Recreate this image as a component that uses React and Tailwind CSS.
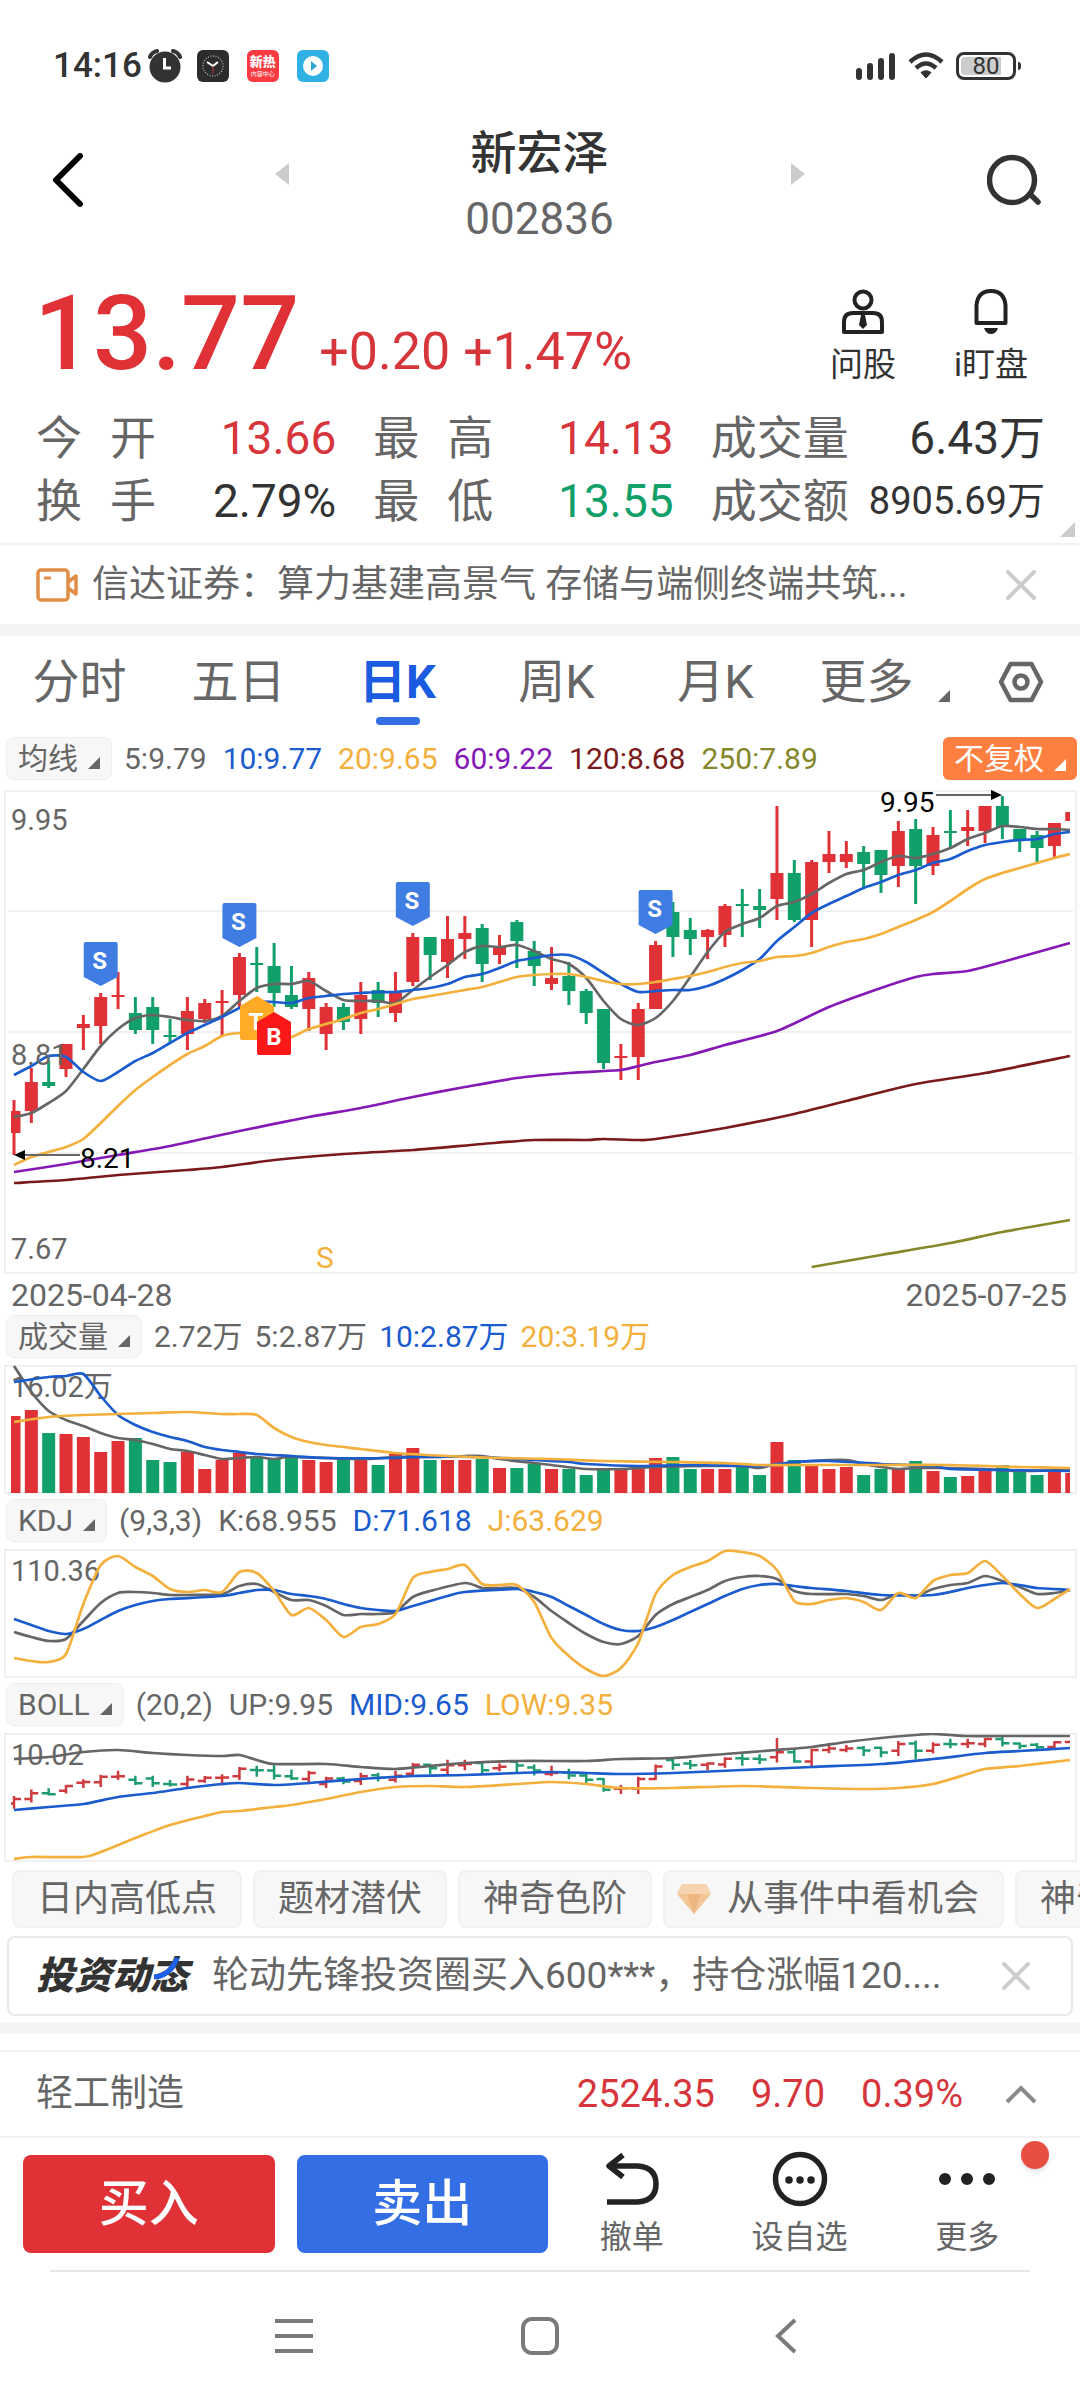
import { useState } from 'react';
import { clsx } from 'clsx';

const RED = '#e03236';
const GREEN = '#12a06a';
const GRAY = '#666666';
const BLUE = '#1a5bce';
const YELLOW = '#f3b03c';

// 61 trading days, one every 17.34 units
const dayX = (i) => 14 + i * 17.34;

// [up, high, bodyTop, bodyBottom, low]
const CANDLES = [
  [1, 320, 331, 353, 375], [1, 288, 302, 331, 343], [0, 281, 302, 306, 308], [1, 264, 264, 289, 297],
  [1, 235, 244, 248, 270], [1, 213, 217, 246, 264], [1, 192, 215, 217, 229], [0, 217, 233, 250, 254],
  [0, 217, 227, 250, 264], [0, 239, 255, 257, 262], [1, 217, 231, 254, 270], [1, 219, 223, 239, 243],
  [1, 210, 221, 223, 256], [1, 173, 177, 215, 229], [0, 167, 183, 185, 212], [0, 163, 186, 213, 227],
  [0, 186, 215, 227, 229], [1, 192, 198, 229, 251], [1, 223, 227, 254, 270], [0, 223, 227, 242, 250],
  [1, 202, 215, 239, 254], [0, 202, 210, 223, 237], [1, 192, 213, 233, 242], [1, 153, 157, 202, 206],
  [0, 157, 157, 175, 200], [1, 136, 159, 182, 198], [1, 136, 153, 159, 179], [0, 144, 148, 184, 202],
  [1, 155, 167, 175, 184], [0, 140, 142, 161, 188], [0, 161, 171, 186, 206], [1, 167, 198, 204, 210],
  [0, 182, 196, 211, 225], [0, 209, 211, 233, 244], [0, 229, 229, 283, 289], [1, 264, 276, 278, 300],
  [1, 223, 229, 277, 300], [1, 161, 165, 229, 229], [0, 122, 132, 157, 177], [0, 138, 150, 159, 175],
  [1, 149, 150, 157, 179], [1, 124, 126, 155, 167], [0, 109, 124, 126, 157], [0, 109, 126, 130, 148],
  [1, 26, 93, 119, 140], [0, 80, 93, 140, 142], [1, 80, 82, 140, 167], [1, 51, 74, 82, 93],
  [1, 61, 74, 82, 88], [0, 66, 72, 84, 107], [0, 70, 70, 95, 113], [1, 41, 51, 86, 107],
  [0, 39, 49, 86, 124], [1, 47, 55, 86, 95], [0, 30, 51, 53, 68], [1, 30, 47, 51, 66],
  [1, 26, 26, 51, 63], [0, 16, 26, 47, 59], [0, 49, 49, 61, 72], [0, 51, 55, 68, 82],
  [1, 43, 43, 66, 77], [1, 32, 32, 41, 41],
];

const VOLUMES = [
  77, 83, 60, 59, 56, 41, 52, 55, 33, 31, 41, 24, 33, 40, 35, 34, 36, 33, 31, 34, 34,
  28, 39, 45, 33, 33, 33, 34, 25, 25, 29, 24, 24, 18, 25, 24, 25, 35, 36, 24, 24, 24,
  26, 18, 51, 33, 28, 24, 26, 18, 24, 24, 32, 22, 16, 17, 22, 28, 21, 18, 21, 20,
];

const daily = (values) => values.map((v, i) => [i, v]);

const PRICE_LINES = [
  { color: GRAY, points: daily([337, 333, 323, 311, 289, 266, 249, 238, 235, 237, 240, 241, 236, 221, 208, 204, 204, 201, 211, 220, 221, 221, 223, 210, 197, 185, 172, 166, 167, 165, 171, 179, 184, 198, 221, 239, 245, 238, 221, 197, 172, 152, 144, 138, 126, 122, 114, 103, 94, 90, 82, 76, 78, 74, 68, 59, 53, 46, 47, 49, 49, 50]) },
  { color: BLUE, points: daily([295, 286, 276, 277, 292, 301, 292, 281, 273, 263, 253, 245, 237, 228, 222, 222, 223, 218, 216, 214, 213, 212, 212, 210, 208, 204, 197, 194, 188, 181, 178, 175, 175, 182, 193, 204, 212, 211, 210, 210, 206, 199, 190, 179, 161, 147, 133, 124, 116, 108, 102, 95, 90, 83, 79, 71, 65, 62, 60, 59, 54, 52]) },
  { color: YELLOW, points: daily([385, 377, 372, 367, 359, 343, 326, 310, 297, 285, 274, 266, 256, 253, 254, 259, 257, 249, 244, 239, 233, 229, 224, 219, 216, 213, 210, 207, 202, 197, 195, 194, 194, 197, 201, 204, 204, 202, 199, 196, 192, 187, 183, 181, 177, 176, 173, 167, 162, 159, 154, 147, 140, 132, 121, 109, 99, 93, 88, 83, 78, 74]) },
  { color: '#8519b5', points: [[0, 392], [3, 384], [6, 375], [9, 366], [13, 351], [17, 337], [20, 328], [23, 317], [26, 307], [29, 298], [32, 293], [35, 290], [36, 286], [37, 282], [39, 275], [41, 265], [44, 251], [47, 227], [50, 208], [52, 197], [53, 194], [55, 191], [57, 182], [61, 163]] },
  { color: '#7a1a1a', points: [[0, 403], [3, 400], [6, 395], [10, 390], [12, 387], [15, 380], [19, 374], [23, 370], [27, 364], [30, 360], [33, 360], [34, 359], [36, 360], [37, 359], [41, 348], [45, 334], [48, 321], [52, 304], [56, 293], [61, 276]] },
  { color: '#86862b', points: [[46, 487], [50, 475], [54, 463], [57, 452], [61, 440]] },
];

const VOLUME_LINES = [
  { color: GRAY, points: [[0, 1], [1, 27], [2, 46], [3, 55], [4, 61], [5, 68], [6, 73], [7, 75], [8, 79], [9, 84], [10, 86], [11, 90], [12, 94], [13, 93], [14, 92], [15, 94], [16, 92], [20, 94], [22, 92], [24, 92], [26, 91], [27, 91], [28, 94], [30, 98], [31, 100], [33, 104], [35, 104], [37, 102], [40, 101], [42, 101], [43, 103], [44, 99], [46, 96], [48, 95], [49, 99], [50, 102], [51, 104], [52, 103], [54, 103], [56, 104], [58, 106], [61, 105]] },
  { color: BLUE, points: [[0, 17], [2, 12], [3, 11], [4, 9], [5, 31], [6, 50], [7, 60], [8, 67], [9, 72], [10, 76], [11, 82], [12, 85], [13, 87], [14, 89], [16, 91], [18, 93], [22, 93], [23, 92], [27, 92], [30, 95], [32, 97], [33, 99], [36, 101], [39, 100], [43, 101], [45, 97], [47, 96], [50, 99], [53, 101], [54, 104], [57, 105], [61, 106]] },
  { color: YELLOW, points: [[0, 57], [2, 52], [4, 50], [6, 49], [8, 48], [10, 47], [12, 49], [13, 49], [14, 50], [15, 63], [16, 72], [17, 77], [18, 80], [20, 84], [22, 88], [25, 91], [28, 93], [31, 94], [34, 96], [38, 97], [41, 98], [43, 100], [45, 100], [50, 100], [54, 100], [58, 102], [61, 103]] },
];

const KDJ_LINES = [
  { color: GRAY, points: [[0, 83], [1, 88], [2, 92], [3, 90], [4, 72], [5, 54], [6, 44], [7, 43], [8, 44], [9, 46], [10, 46], [12, 45], [13, 37], [14, 35], [15, 43], [16, 51], [17, 51], [18, 57], [19, 66], [20, 65], [21, 65], [22, 63], [23, 48], [24, 42], [26, 34], [27, 39], [28, 39], [29, 39], [30, 48], [31, 62], [32, 74], [33, 85], [34, 93], [35, 95], [36, 87], [37, 66], [38, 55], [39, 48], [40, 41], [41, 32], [42, 28], [43, 27], [44, 30], [45, 42], [46, 45], [48, 45], [49, 47], [50, 51], [51, 45], [52, 47], [53, 40], [54, 36], [55, 34], [56, 27], [57, 32], [58, 38], [59, 45], [60, 44], [61, 41]] },
  { color: BLUE, points: [[0, 70], [1, 76], [2, 82], [3, 85], [4, 80], [5, 71], [6, 62], [7, 56], [8, 52], [9, 50], [12, 47], [13, 44], [14, 41], [15, 41], [16, 45], [17, 47], [18, 50], [19, 55], [20, 59], [21, 61], [22, 62], [23, 57], [24, 52], [25, 47], [26, 43], [29, 40], [30, 43], [31, 48], [32, 57], [33, 66], [34, 75], [35, 81], [36, 82], [37, 78], [38, 71], [39, 63], [40, 55], [41, 47], [42, 40], [43, 36], [44, 35], [45, 37], [46, 39], [48, 42], [50, 46], [53, 46], [55, 39], [56, 36], [57, 34], [58, 36], [59, 39], [60, 40], [61, 41]] },
  { color: YELLOW, points: [[0, 109], [1, 112], [2, 113], [3, 105], [4, 55], [5, 16], [6, 7], [7, 18], [8, 27], [9, 40], [10, 43], [11, 41], [12, 43], [13, 23], [14, 24], [15, 42], [16, 66], [17, 59], [18, 71], [19, 88], [20, 78], [21, 75], [22, 65], [23, 29], [24, 23], [25, 20], [26, 16], [27, 35], [28, 36], [29, 36], [30, 53], [31, 89], [32, 107], [33, 120], [34, 127], [35, 119], [36, 94], [37, 45], [38, 26], [39, 18], [40, 12], [41, 2], [42, 3], [43, 7], [44, 21], [45, 52], [46, 55], [47, 51], [48, 49], [49, 53], [50, 61], [51, 44], [52, 49], [53, 32], [54, 26], [55, 24], [56, 12], [57, 27], [58, 45], [59, 59], [60, 50], [61, 40]] },
];

const BOLL_LINES = [
  { color: GRAY, points: [[0, 26], [2, 24], [4, 19], [6, 17], [8, 20], [10, 22], [12, 23], [13, 22], [14, 27], [15, 31], [18, 31], [20, 34], [22, 36], [24, 33], [26, 30], [29, 28], [33, 28], [35, 26], [38, 25], [41, 21], [44, 17], [46, 14], [48, 9], [50, 5], [52, 2], [53, 1], [54, 2], [55, 3], [57, 3], [61, 3]] },
  { color: BLUE, points: [[0, 77], [2, 74], [4, 71], [6, 64], [8, 60], [10, 55], [12, 51], [13, 50], [15, 52], [17, 50], [20, 46], [23, 43], [26, 42], [29, 40], [31, 39], [33, 40], [35, 41], [38, 40], [42, 37], [46, 34], [50, 31], [53, 26], [56, 20], [58, 18], [61, 15]] },
  { color: YELLOW, points: [[0, 126], [1, 124], [4, 124], [5, 119], [7, 105], [9, 92], [11, 83], [12, 79], [13, 78], [15, 74], [16, 72], [18, 66], [20, 59], [22, 54], [24, 53], [26, 54], [29, 51], [31, 49], [33, 51], [35, 55], [38, 55], [42, 53], [46, 55], [49, 56], [51, 55], [53, 51], [55, 41], [56, 36], [58, 33], [61, 27]] },
];

const MARKERS = [
  { day: 5, y: 162, label: 'S' },
  { day: 13, y: 123, label: 'S' },
  { day: 23, y: 102, label: 'S' },
  { day: 37, y: 110, label: 'S' },
];

// Catmull-Rom spline through the points
function curve(points) {
  const p = points.map(([i, y]) => [Math.min(dayX(i), 1070), y]);
  let d = `M${p[0][0]} ${p[0][1]}`;
  for (let i = 0; i < p.length - 1; i++) {
    const a = p[i - 1] || p[i];
    const b = p[i];
    const c = p[i + 1];
    const e = p[i + 2] || c;
    d += `C${b[0] + (c[0] - a[0]) / 8} ${b[1] + (c[1] - a[1]) / 8} ${c[0] - (e[0] - b[0]) / 8} ${c[1] - (e[1] - b[1]) / 8} ${c[0]} ${c[1]}`;
  }
  return d;
}

function Lines({ lines }) {
  return lines.map((line) => (
    <path key={line.color} d={curve(line.points)} fill="none" stroke={line.color} strokeWidth="2.700" />
  ));
}

function barSpan(i) {
  const left = Math.max(dayX(i) - 6.5, 11);
  const right = Math.min(dayX(i) + 6.5, 1070);
  return { x: left, width: right - left };
}

function PriceChart() {
  return (
    <svg viewBox="0 10 1080 484" className="block w-full overflow-visible" role="img" aria-label="日K线图">
      <rect x="5" y="11" width="1071" height="482" fill="none" stroke="#f0f0f0" strokeWidth="2" />
      <path d="M8 131H1073M8 252H1073M8 373H1073" stroke="#f0f0f0" strokeWidth="2" />
      {CANDLES.map(([up, high, top, bottom, low], i) => (
        <g key={i} fill={up ? RED : GREEN}>
          {i < 61 && <rect x={dayX(i) - 1.5} y={high} width="3" height={low - high} />}
          <rect {...barSpan(i)} y={top} height={bottom - top} />
        </g>
      ))}
      <Lines lines={PRICE_LINES} />
      <g fill={GRAY} fontSize="29">
        <text x="11" y="50">9.95</text>
        <text x="11" y="285">8.81</text>
        <text x="11" y="479">7.67</text>
      </g>
      <g fill="#000" fontSize="28">
        <path d="M24 375H80M936 15H992" stroke={GRAY} strokeWidth="2" />
        <path d="M14 375l11-5v10zM1002 15l-11-5v10z" />
        <text x="80" y="388">8.21</text>
        <text x="880" y="32">9.95</text>
      </g>
      <text x="316" y="488" fill={YELLOW} fontSize="30">S</text>
      <g fill="#fff" fontSize="24" fontWeight="700" textAnchor="middle">
        {MARKERS.map((m) => (
          <g key={m.day}>
            <path
              d={`M${dayX(m.day) - 15} ${m.y}h30q2 0 2 2v33l-17 9l-17 -9v-33q0 -2 2 -2z`}
              fill="#3f7de3"
            />
            <text x={dayX(m.day) - 1} y={m.y + 27}>{m.label}</text>
          </g>
        ))}
        <path d="M257 216l17 10v32q0 2 -2 2h-30q-2 0 -2 -2v-32z" fill="#ffab27" />
        <text x="256" y="250">T</text>
        <path d="M274 232l17 10v31q0 2 -2 2h-30q-2 0 -2 -2v-31z" fill="#fb1818" />
        <text x="274" y="265">B</text>
      </g>
    </svg>
  );
}

function SubChart({ title, max, lines, children }) {
  return (
    <svg viewBox="0 0 1080 129" className="block w-full" role="img" aria-label={title}>
      <rect x="5" y="1" width="1071" height="127" fill="none" stroke="#f0f0f0" strokeWidth="2" />
      {children}
      <text x="11" y="32" fill={GRAY} fontSize="29">{max}</text>
      <Lines lines={lines} />
    </svg>
  );
}

function VolumeBars() {
  return VOLUMES.map((v, i) => (
    <rect key={i} {...barSpan(i)} y={128 - v} height={v} fill={CANDLES[i][0] ? RED : GREEN} />
  ));
}

function BollBars() {
  const y = (v) => 6 + (v - 26) * 0.197;
  return CANDLES.map(([up, high, top, bottom, low], i) => {
    const x = dayX(i);
    const open = y(up ? bottom : top);
    const close = y(up ? top : bottom);
    const stem = i < 61 ? `M${x} ${y(high) - 1}V${y(low) + 1}M${x} ${close}H${x + 7}` : '';
    return (
      <path
        key={i}
        d={`M${Math.max(x - 7, 11)} ${open}H${Math.min(x, 1070)}${stem}`}
        stroke={up ? '#cf3a3f' : '#1f9d6f'}
        strokeWidth="2.500"
      />
    );
  });
}

function Corner({ className }) {
  return (
    <svg viewBox="0 0 12 12" className={clsx('inline-block size-3', className)} aria-hidden="true">
      <path d="M12 0V12H0Z" fill="currentColor" />
    </svg>
  );
}

function IndicatorRow({ name, values, className, gap = 'gap-4', children }) {
  return (
    <div className={clsx('flex items-center pl-[6px] text-[30px] leading-[43px] whitespace-nowrap', className)}>
      <button className="mr-3 flex h-[43px] items-center gap-[10px] rounded-lg border border-[#eeeeee] bg-[#f7f7f7] px-[11px] text-[30px] text-[#666666]">
        {name}
        <Corner className="mt-2" />
      </button>
      <div className={clsx('flex', gap)}>
        {values.map(([text, color]) => (
          <span key={text} className={color}>{text}</span>
        ))}
      </div>
      {children}
    </div>
  );
}

const gray = 'text-[#666666]';
const blue = 'text-[#1a5bce]';
const yellow = 'text-[#f3b03c]';

function CloseIcon({ className }) {
  return (
    <svg viewBox="0 0 30 30" className={className} fill="none" stroke="#cccccc" strokeWidth="4" strokeLinecap="round">
      <path d="M2 2L28 28M28 2L2 28" />
    </svg>
  );
}

function StatusBar() {
  return (
    <div className="flex h-[86px] items-end justify-between pr-[59px] pl-[53px]">
      <div className="flex h-10 items-center">
        <span className="text-[35px] leading-10 font-medium text-[#333333]">14:16</span>
        <svg viewBox="0 0 34 34" className="ml-1.5 size-[34px]">
          <circle cx="17" cy="18" r="15.5" fill="#333" />
          <path d="M2 8Q4 3 9 2M32 8Q30 3 25 2" stroke="#333" strokeWidth="4" strokeLinecap="round" fill="none" />
          <path d="M16.500 9V19H23" stroke="#fff" strokeWidth="3" fill="none" />
        </svg>
        <svg viewBox="0 0 32 32" className="ml-[15px] size-8">
          <rect width="32" height="32" rx="6" fill="#2c2c2c" />
          <circle cx="16" cy="16" r="10" fill="none" stroke="#aaa" strokeWidth="1.500" strokeDasharray="1 1.600" />
          <path d="M10 12L16 16L21 12" stroke="#fff" strokeWidth="2" fill="none" />
          <path d="M16 16V24" stroke="#c33" strokeWidth="1" />
        </svg>
        <div className="ml-[18px] flex size-8 flex-col items-center justify-center rounded-md bg-[#fb3a41] text-white">
          <span className="text-[13px] leading-4 font-black">新热</span>
          <span className="text-[6px] leading-2">内容中心</span>
        </div>
        <svg viewBox="0 0 32 32" className="ml-[18px] size-8">
          <rect width="32" height="32" rx="6" fill="#2fb2e3" />
          <circle cx="16" cy="16" r="10" fill="#fff" />
          <path d="M14 11V21L20 16Z" fill="#2fa5d3" />
        </svg>
      </div>
      <div className="flex h-10 items-center gap-3">
        <svg viewBox="0 0 40 28" className="h-7 w-10" stroke="#333" strokeWidth="6" strokeLinecap="round">
          <path d="M3 25V19M14 25V14M25 25V9M36 25V4" />
        </svg>
        <svg viewBox="0 0 36 28" className="h-7 w-9" fill="none" stroke="#333" strokeWidth="4.500">
          <path d="M2 10Q18 -5 34 10" />
          <path d="M8 16Q18 7 28 16" />
          <path d="M13 20.500Q18 17 23 20.500L18 26Z" fill="#333" strokeWidth="1" />
        </svg>
        <div className="flex items-center">
          <div className="relative flex h-7 w-[60px] items-center justify-center overflow-hidden rounded-lg border-3 border-[#333333]">
            <span className="absolute inset-y-[2px] left-[2px] w-10 rounded-l-sm bg-[#cccccc]" />
            <span className="relative text-[24px] leading-6 text-[#333333]">80</span>
          </div>
          <span className="ml-[2px] h-2 w-[3px] rounded-r bg-[#333333]" />
        </div>
      </div>
    </div>
  );
}

function Header() {
  return (
    <header className="flex h-[188px] items-center justify-between pr-[37px] pl-[52px]">
      <button aria-label="返回" className="w-10">
        <svg viewBox="0 0 32 54" className="h-[54px] w-8" fill="none" stroke="#000" strokeWidth="6" strokeLinecap="round" strokeLinejoin="round">
          <path d="M28 3L4 27L28 51" />
        </svg>
      </button>
      <div className="flex w-[530px] items-center justify-between">
        <button aria-label="上一只" className="pb-3">
          <svg viewBox="0 0 14 22" className="h-[22px] w-3.5"><path d="M14 0V22L0 11Z" fill="#ccc" /></svg>
        </button>
        <div className="pt-3 text-center leading-[66px]">
          <h1 className="text-[46px] font-medium text-[#333333]">新宏泽</h1>
          <p className="text-[44px] text-[#666666]">002836</p>
        </div>
        <button aria-label="下一只" className="pb-3">
          <svg viewBox="0 0 14 22" className="h-[22px] w-3.5"><path d="M0 0V22L14 11Z" fill="#ccc" /></svg>
        </button>
      </div>
      <button aria-label="搜索">
        <svg viewBox="0 0 56 52" className="h-[52px] w-14" fill="none" stroke="#333" strokeWidth="5.500" strokeLinecap="round">
          <circle cx="25" cy="26" r="22.500" />
          <path d="M44 41L51 48" />
        </svg>
      </button>
    </header>
  );
}

const STATS = [
  ['今开', '13.66', 'text-[46px] text-[#d6353b]'],
  ['最高', '14.13', 'text-[46px] text-[#d6353b]'],
  ['成交量', '6.43万', 'text-[46px] text-[#333333]'],
  ['换手', '2.79%', 'text-[46px] text-[#333333]'],
  ['最低', '13.55', 'text-[46px] text-[#12a06a]'],
  ['成交额', '8905.69万', 'text-[38px] text-[#333333]'],
];

function Quote() {
  return (
    <section className="relative border-b-2 border-[#f2f2f2] pb-[10px]">
      <div className="flex h-[133px] justify-between pr-[52px] pl-[34px]">
        <div className="flex items-baseline gap-5 text-[#e03236]">
          <span className="text-[104px] leading-[120px] font-medium">13.77</span>
          <span className="text-[52px] text-[#d6353b]">+0.20 +1.47%</span>
        </div>
        <div className="flex gap-[58px] pt-[15px] text-[33px] leading-10 text-[#333333]">
          <button className="flex h-[96px] flex-col items-center justify-between">
            <svg viewBox="0 0 44 46" className="h-[46px] w-11" fill="none" stroke="#222" strokeWidth="4">
              <circle cx="22" cy="11" r="8.500" />
              <path d="M3 43V33Q3 24 12 24H32Q41 24 41 33V43Z" strokeLinejoin="round" />
              <path d="M20 26H24L26 36L22 40L18 36Z" fill="#222" stroke="none" />
            </svg>
            <span>问股</span>
          </button>
          <button className="flex h-[96px] flex-col items-center justify-between">
            <svg viewBox="0 0 34 46" className="h-[46px] w-[34px]" fill="none" stroke="#222" strokeWidth="4">
              <path d="M2.500 34V16Q4 2 17 2Q30 2 31.500 16V34Z" strokeLinejoin="round" />
              <path d="M10 39H24Q22 45 17 45Q12 45 10 39Z" fill="#222" stroke="none" />
            </svg>
            <span>i盯盘</span>
          </button>
        </div>
      </div>
      <dl className="grid grid-cols-[300fr_300fr_334fr] gap-x-[37px] pr-[35px] pl-9 leading-[63px] text-[46px]">
        {STATS.map(([label, value, style]) => (
          <div key={label} className="flex items-center justify-between whitespace-nowrap">
            <dt className={clsx('flex justify-between text-[#666666]', label.length === 2 && 'w-[120px]')}>
              {label.length === 2 ? label.split('').map((c) => <span key={c}>{c}</span>) : label}
            </dt>
            <dd className={style}>{value}</dd>
          </div>
        ))}
      </dl>
      <Corner className="absolute right-[5px] bottom-1.5 size-[15px] text-[#cccccc]" />
    </section>
  );
}

function News() {
  return (
    <div className="flex h-[91px] items-center border-b-12 border-[#f4f4f4] pr-11 pl-9">
      <svg viewBox="0 0 42 34" className="h-[34px] w-[42px]" fill="none" stroke="#e08e45" strokeWidth="3.500" strokeLinejoin="round">
        <rect x="2" y="2" width="30" height="30" rx="3" />
        <path d="M8 10H15" strokeWidth="3" />
        <path d="M32 14L40 8V26L32 20" />
      </svg>
      <a href="#news" className="ml-3.5 flex-1 truncate text-[37px] text-[#666666]">
        信达证券：算力基建高景气 存储与端侧终端共筑...
      </a>
      <button aria-label="关闭">
        <CloseIcon className="size-[30px]" />
      </button>
    </div>
  );
}

function Tabs() {
  const [active, setActive] = useState('日K');
  return (
    <nav className="flex h-[92px] items-center">
      <div className="grid h-full flex-1 grid-cols-6">
        {['分时', '五日', '日K', '周K', '月K', '更多'].map((tab) => (
          <button
            key={tab}
            onClick={() => setActive(tab)}
            className={clsx(
              'relative flex items-center justify-center text-[47px]',
              tab === active ? 'font-bold text-[#1a5be0]' : 'text-[#666666]',
              tab === '更多' && 'pl-5'
            )}
          >
            {tab}
            {tab === '更多' && <Corner className="mt-7 ml-6" />}
            {tab === active && (
              <span className="absolute bottom-[3px] left-1/2 h-2 w-11 -translate-x-1/2 rounded-full bg-[#346ee5]" />
            )}
          </button>
        ))}
      </div>
      <button aria-label="设置" className="flex w-[126px] justify-center pl-2">
        <svg viewBox="0 0 46 42" className="h-[42px] w-[46px]" fill="none" stroke="#666" strokeWidth="4.500" strokeLinejoin="round">
          <path d="M12.500 3H33.500L43 21L33.500 39H12.500L3 21Z" />
          <circle cx="23" cy="21" r="6.500" />
        </svg>
      </button>
    </nav>
  );
}

function ChartTags() {
  const tag = 'flex h-[58px] shrink-0 items-center rounded-lg border-2 border-[#f1f1f1] bg-[#f7f7f7]';
  return (
    <div className="flex gap-[11px] overflow-hidden pt-2 pl-3 text-[36px] whitespace-nowrap text-[#666666]">
      <button className={clsx(tag, 'px-[23px]')}>日内高低点</button>
      <button className={clsx(tag, 'px-[23px]')}>题材潜伏</button>
      <button className={clsx(tag, 'px-[23px]')}>神奇色阶</button>
      <button className={clsx(tag, 'gap-4 pr-[23px] pl-3')}>
        <svg viewBox="0 0 34 30" className="h-[30px] w-[34px]">
          <path d="M5 0H29L34 10L17 30L0 10Z" fill="#f3c698" />
          <path d="M5 0H29L34 10H0Z" fill="#f6d4b0" />
          <path d="M10 10L17 30L24 10Z" fill="#eeb781" />
        </svg>
        从事件中看机会
      </button>
      <button className={clsx(tag, 'px-[23px]')}>神奇九转</button>
    </div>
  );
}

function Banner() {
  return (
    <div className="mx-[7px] mt-2 flex h-20 items-center rounded-lg border-2 border-[#e8e8e8] pr-[41px] pl-[27px]">
      <div className="relative mr-6 text-[38px] leading-10 font-black text-[#333333] italic">
        投资动态
        <svg viewBox="0 0 28 24" className="absolute top-0 right-2 h-6 w-7" fill="none" stroke="#1e62ec" strokeWidth="5">
          <path d="M25 2Q18 20 2 21" />
        </svg>
      </div>
      <a href="#feed" className="flex-1 truncate text-[37px] text-[#666666]">
        轮动先锋投资圈买入600***，持仓涨幅120....
      </a>
      <button aria-label="关闭">
        <CloseIcon className="size-7" />
      </button>
    </div>
  );
}

function Sector() {
  return (
    <section className="mt-1.5 border-t-12 border-[#f4f4f4] pt-4">
      <div className="flex h-[88px] items-center border-y-2 border-[#f2f2f2] pr-[43px] pl-9 text-[38px] text-[#d6353b]">
        <span className="flex-1 text-[37px] text-[#666666]">轻工制造</span>
        <span>2524.35</span>
        <span className="ml-9">9.70</span>
        <span className="ml-9">0.39%</span>
        <button aria-label="展开" className="ml-[42px]">
          <svg viewBox="0 0 32 20" className="h-5 w-8" fill="none" stroke="#8a8a8a" strokeWidth="4">
            <path d="M2 18L16 4L30 18" />
          </svg>
        </button>
      </div>
    </section>
  );
}

function Action({ label, children }) {
  return (
    <button className="flex flex-2 flex-col items-center gap-[10px] text-[32px] leading-10 text-[#666666]">
      <svg viewBox="0 0 56 56" className="size-14" fill="none" stroke="#222" strokeWidth="5.500">
        {children}
      </svg>
      {label}
    </button>
  );
}

function TradeBar() {
  return (
    <footer className="relative flex h-[132px] items-center pr-[29px] pl-[23px]">
      <button className="mr-[22px] h-[98px] flex-3 rounded-lg bg-[#e03236] text-[50px] font-medium text-white">买入</button>
      <button className="h-[98px] flex-3 rounded-lg bg-[#346ee5] text-[50px] font-medium text-white">卖出</button>
      <Action label="撤单">
        <path d="M4 15H33Q52 16 52 33T33 51H3" />
        <path d="M19 4L5 15L19 26" strokeLinejoin="round" />
      </Action>
      <Action label="设自选">
        <circle cx="28" cy="28" r="24.500" />
        <path d="M17 29h.01M28 29h.01M39 29h.01" strokeWidth="7.500" strokeLinecap="round" />
      </Action>
      <Action label="更多">
        <path d="M6 28h.01M28 28h.01M50 28h.01" strokeWidth="12" strokeLinecap="round" />
      </Action>
      <span className="absolute top-[3px] right-[31px] size-7 rounded-full bg-[#e64f42] shadow-md" />
    </footer>
  );
}

function SystemNav() {
  return (
    <div className="mx-[50px] flex h-[130px] items-center justify-center gap-[208px] border-t-2 border-[#e6e6e6]">
      <button aria-label="最近任务">
        <svg viewBox="0 0 38 36" className="h-9 w-[38px]" stroke="#7a7a7a" strokeWidth="4">
          <path d="M0 3H38M0 18H38M0 33H38" />
        </svg>
      </button>
      <button aria-label="主页">
        <svg viewBox="0 0 38 38" className="size-[38px]" fill="none" stroke="#7a7a7a" strokeWidth="4">
          <rect x="2" y="2" width="34" height="34" rx="9" />
        </svg>
      </button>
      <button aria-label="后退" className="flex w-[38px] justify-center">
        <svg viewBox="0 0 22 36" className="h-9 w-[22px]" fill="none" stroke="#7a7a7a" strokeWidth="4">
          <path d="M20 2L3 18L20 34" />
        </svg>
      </button>
    </div>
  );
}

function App() {
  return (
    <div className="w-full overflow-hidden bg-white font-[Roboto,'Noto_Sans_CJK_SC',sans-serif]">
      <StatusBar />
      <Header />
      <Quote />
      <News />
      <Tabs />
      <IndicatorRow
        name="均线"
        className="pt-[9px] pb-[10px]"
        values={[
          ['5:9.79', gray],
          ['10:9.77', blue],
          ['20:9.65', yellow],
          ['60:9.22', 'text-[#8519b5]'],
          ['120:8.68', 'text-[#7a1a1a]'],
          ['250:7.89', 'text-[#86862b]'],
        ]}
      >
        <button className="mr-[3px] ml-auto flex h-[43px] items-center gap-[10px] rounded-md bg-[#ff7f40] px-[11px] text-[30px] text-white">
          不复权
          <Corner className="mt-3" />
        </button>
      </IndicatorRow>
      <PriceChart />
      <div className="flex h-[41px] items-center justify-between pr-[13px] pl-[11px] text-[32px] text-[#666666]">
        <span>2025-04-28</span>
        <span>2025-07-25</span>
      </div>
      <IndicatorRow
        name="成交量"
        className="pb-[7px]"
        gap="gap-3"
        values={[['2.72万', gray], ['5:2.87万', gray], ['10:2.87万', blue], ['20:3.19万', yellow]]}
      />
      <SubChart title="成交量" max="16.02万" lines={VOLUME_LINES}>
        <VolumeBars />
      </SubChart>
      <IndicatorRow
        name="KDJ"
        className="pt-[5px] pb-[7px]"
        values={[['(9,3,3)', gray], ['K:68.955', gray], ['D:71.618', blue], ['J:63.629', yellow]]}
      />
      <SubChart title="KDJ" max="110.36" lines={KDJ_LINES} />
      <IndicatorRow
        name="BOLL"
        className="pt-[5px] pb-[7px]"
        values={[['(20,2)', gray], ['UP:9.95', gray], ['MID:9.65', blue], ['LOW:9.35', yellow]]}
      />
      <SubChart title="BOLL" max="10.02" lines={BOLL_LINES}>
        <BollBars />
      </SubChart>
      <ChartTags />
      <Banner />
      <Sector />
      <TradeBar />
      <SystemNav />
    </div>
  );
}

export default App;
